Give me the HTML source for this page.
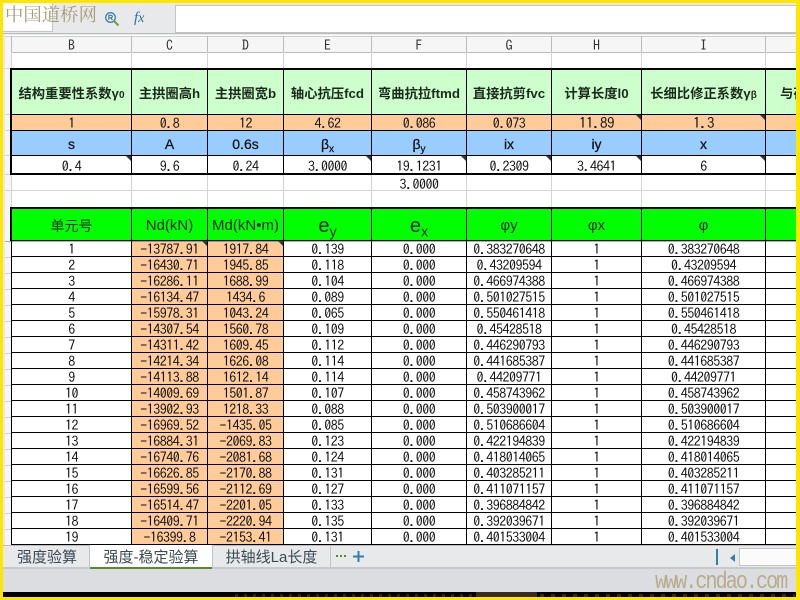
<!DOCTYPE html>
<html lang="zh"><head><meta charset="utf-8"><title>强度-稳定验算</title>
<style>
html,body{margin:0;padding:0;background:#ffe600}
#p{position:relative;width:800px;height:600px;overflow:hidden;background:#ffe600;font-family:"IPAGothic","Liberation Mono","Noto Sans CJK SC",monospace;color:#111}
#c{position:absolute;left:3px;top:3px;width:793px;height:594px;overflow:hidden;background:#e8e9eb}
.a{position:absolute}
#in{left:0;top:0;width:800px;height:600px}
table{position:absolute;left:11px;border-collapse:separate;border-spacing:0;table-layout:fixed;width:785px}
td{box-sizing:border-box;padding:0;text-align:center;border-right:1px solid #000;border-bottom:1px solid #000;white-space:nowrap;overflow:hidden;position:relative;vertical-align:middle}
td:first-child{border-left:1px solid #000}
td:last-child{border-right:0}
.m td{font:14px/14px "IPAGothic","Liberation Mono",monospace;letter-spacing:-.5px;padding-top:1px;color:#111}
.g{background:#ccffcc}.g td{height:45px;font:bold 13.3px "Liberation Sans","Noto Sans CJK SC",sans-serif;letter-spacing:0;color:#1c2a1c;padding-top:1px}
.o td{height:16px;background:#ffcc99}
.b td{height:25px;background:#99ccff;font:14px "Liberation Sans","Noto Sans CJK SC",sans-serif;letter-spacing:0;color:#111;-webkit-text-stroke:.25px #111}
.w td{height:18px;background:#fff;border-bottom:0}
.h td{height:32px;background:#00ff00;font:15px "Liberation Sans","Noto Sans CJK SC",sans-serif;letter-spacing:0;color:#0c2a0c;border-bottom:0}
.d td{height:16px;background:#fff}
.d td:nth-child(2),.d td:nth-child(3){background:#ffcc99}
.t::after{content:"";position:absolute;top:0;right:0;border-top:5px solid #333;border-left:5px solid transparent}
sub{font-size:.72em;line-height:0;vertical-align:-.3em}
.k{background:#000}
.v{width:1px;top:52px;height:16px;background:#d4d4d4}
.cl{font:14px "IPAGothic","Liberation Mono",monospace;top:38px;height:14px;line-height:14px;text-align:center;color:#333}
.tab{top:545px;height:23px;font:15px/26px "Liberation Sans","Noto Sans CJK SC",sans-serif;color:#3c4a55;text-align:center;box-sizing:border-box}
</style></head><body><div id="p"><div id="c"><div class="a" id="in" style="left:-3px;top:-3px">

<!-- toolbar -->
<div class="a" style="left:3px;top:3px;width:793px;height:33px;background:#e8e9eb"></div>
<div class="a" style="left:3px;top:3px;width:50px;height:29px;background:#fff;border-bottom:1px solid #c4c4c4;border-right:1px solid #c4c4c4;box-sizing:border-box"></div>
<div class="a" style="left:175px;top:5px;width:622px;height:28px;background:#fff;border:1px solid #c4c4c4;box-sizing:border-box"></div>
<div class="a" style="left:3px;top:33px;width:793px;height:1px;background:#bdbdbd"></div>
<svg class="a" style="left:104px;top:11px" width="16" height="16" viewBox="0 0 16 16"><circle cx="6.5" cy="6.5" r="4.8" fill="#eef3f6" stroke="#3a7fae" stroke-width="1.3"/><path d="M4.8 9V4.2h2.2a1.3 1.3 0 0 1 0 2.6H5M6.6 6.8 8.4 9" fill="none" stroke="#2c6a98" stroke-width="1"/><path d="M10.2 10.2 14.4 14.4" stroke="#6a9a3a" stroke-width="2"/></svg>
<div class="a" style="left:134px;top:8px;font:italic 15px 'Liberation Serif',serif;color:#2d6f9c;line-height:20px">f<span style="font-size:14px">x</span></div>

<!-- sheet -->
<div class="a" style="left:5px;top:35px;width:791px;height:510px;background:#fff"></div>
<div class="a" style="left:3px;top:35px;width:2px;height:510px;background:#e8e9eb"></div>
<div class="a" style="left:5px;top:36px;width:791px;height:16px;background:#f6f6f6;border-bottom:1px solid #bbb"></div>
<div class="a" style="left:5px;top:36px;width:6px;height:509px;background:#f6f6f6"></div>
<div class="a" style="left:5px;top:36px;width:791px;height:1px;background:#ccc"></div>
<div class="a" style="left:11px;top:36px;width:1px;height:17px;background:#bbb"></div>
<div class="a" style="left:131px;top:36px;width:1px;height:17px;background:#bbb"></div>
<div class="a" style="left:207px;top:36px;width:1px;height:17px;background:#bbb"></div>
<div class="a" style="left:283px;top:36px;width:1px;height:17px;background:#bbb"></div>
<div class="a" style="left:371px;top:36px;width:1px;height:17px;background:#bbb"></div>
<div class="a" style="left:466px;top:36px;width:1px;height:17px;background:#bbb"></div>
<div class="a" style="left:551px;top:36px;width:1px;height:17px;background:#bbb"></div>
<div class="a" style="left:641px;top:36px;width:1px;height:17px;background:#bbb"></div>
<div class="a" style="left:765px;top:36px;width:1px;height:17px;background:#bbb"></div>
<div class="a cl" style="left:12px;width:119px">B</div>
<div class="a cl" style="left:132px;width:75px">C</div>
<div class="a cl" style="left:208px;width:75px">D</div>
<div class="a cl" style="left:284px;width:87px">E</div>
<div class="a cl" style="left:372px;width:94px">F</div>
<div class="a cl" style="left:467px;width:84px">G</div>
<div class="a cl" style="left:552px;width:89px">H</div>
<div class="a cl" style="left:642px;width:123px">I</div>

<!-- light gridlines -->
<div class="a v" style="left:11px"></div><div class="a v" style="left:131px"></div><div class="a v" style="left:207px"></div><div class="a v" style="left:283px"></div><div class="a v" style="left:371px"></div><div class="a v" style="left:466px"></div><div class="a v" style="left:551px"></div><div class="a v" style="left:641px"></div><div class="a v" style="left:765px"></div>
<div class="a v" style="left:11px;top:175px;height:33px"></div><div class="a v" style="left:131px;top:175px;height:33px"></div><div class="a v" style="left:207px;top:175px;height:33px"></div><div class="a v" style="left:283px;top:175px;height:33px"></div><div class="a v" style="left:371px;top:175px;height:33px"></div><div class="a v" style="left:466px;top:175px;height:33px"></div><div class="a v" style="left:551px;top:175px;height:33px"></div><div class="a v" style="left:641px;top:175px;height:33px"></div><div class="a v" style="left:765px;top:175px;height:33px"></div>
<div class="a" style="left:12px;top:190px;width:784px;height:1px;background:#d4d4d4"></div>
<div class="a" style="left:5px;top:68px;width:6px;height:1px;background:#d4d4d4"></div>
<div class="a" style="left:5px;top:114px;width:6px;height:1px;background:#d4d4d4"></div>
<div class="a" style="left:5px;top:130px;width:6px;height:1px;background:#d4d4d4"></div>
<div class="a" style="left:5px;top:155px;width:6px;height:1px;background:#d4d4d4"></div>
<div class="a" style="left:5px;top:174px;width:6px;height:1px;background:#d4d4d4"></div>
<div class="a" style="left:5px;top:190px;width:6px;height:1px;background:#d4d4d4"></div>
<div class="a" style="left:5px;top:257px;width:6px;height:288px;background:repeating-linear-gradient(180deg,#d4d4d4 0,#d4d4d4 1px,transparent 1px,transparent 16px)"></div>
<div class="a" style="left:372px;top:177px;width:94px;text-align:center;font:14px/14px 'IPAGothic','Liberation Mono',monospace;letter-spacing:-.5px">3.0000</div>

<!-- top table -->
<table class="m" style="top:70px">
<colgroup><col style="width:121px"><col style="width:76px"><col style="width:76px"><col style="width:88px"><col style="width:95px"><col style="width:85px"><col style="width:90px"><col style="width:124px"><col style="width:30px"></colgroup>
<tr class="g"><td style="background:#ccffcc">结构重要性系数γ<span style="font-size:10px">0</span></td><td style="background:#ccffcc">主拱圈高h</td><td style="background:#ccffcc">主拱圈宽b</td><td style="background:#ccffcc">轴心抗压fcd</td><td style="background:#ccffcc">弯曲抗拉ftmd</td><td style="background:#ccffcc">直接抗剪fvc</td><td style="background:#ccffcc">计算长度l0</td><td style="background:#ccffcc">长细比修正系数γ<span style="font-size:10px">β</span></td><td style="background:#ccffcc;text-align:left;padding-left:14px">与荷</td></tr>
<tr class="o"><td>1</td><td>0.8</td><td>12</td><td>4.62</td><td>0.086</td><td>0.073</td><td class="t" style="font-size:15px">11.89</td><td class="t" style="font-size:15px">1.3</td><td></td></tr>
<tr class="b"><td>s</td><td>A</td><td>0.6s</td><td>β<sub>x</sub></td><td>β<sub>y</sub></td><td>ix</td><td>iy</td><td>x</td><td></td></tr>
<tr class="w"><td class="t">0.4</td><td>9.6</td><td>0.24</td><td class="t">3.0000</td><td class="t">19.1231</td><td class="t">0.2309</td><td class="t">3.4641</td><td class="t">6</td><td></td></tr>
</table>
<div class="a k" style="left:10px;top:68px;width:786px;height:2px"></div>
<div class="a k" style="left:10px;top:173px;width:786px;height:2px"></div>
<div class="a k" style="left:10px;top:68px;width:2px;height:107px"></div>

<!-- data table -->
<table class="m" style="top:209px">
<colgroup><col style="width:121px"><col style="width:76px"><col style="width:76px"><col style="width:88px"><col style="width:95px"><col style="width:85px"><col style="width:90px"><col style="width:124px"><col style="width:30px"></colgroup>
<tr class="h"><td style="font-size:14px">单元号</td><td>Nd(kN)</td><td>Md(kN•m)</td><td style="font-size:20px;line-height:30px;padding-top:2px">e<sub>y</sub></td><td style="font-size:20px;line-height:30px;padding-top:2px">e<sub>x</sub></td><td>φy</td><td>φx</td><td>φ</td><td></td></tr>
</table>
<table class="m d" style="top:241px">
<colgroup><col style="width:121px"><col style="width:76px"><col style="width:76px"><col style="width:88px"><col style="width:95px"><col style="width:85px"><col style="width:90px"><col style="width:124px"><col style="width:30px"></colgroup>
<tr><td>1</td><td class="t">-13787.91</td><td class="t">1917.84</td><td>0.139</td><td>0.000</td><td>0.383270648</td><td>1</td><td>0.383270648</td><td></td></tr>
<tr><td>2</td><td>-16430.71</td><td>1945.85</td><td>0.118</td><td>0.000</td><td>0.43209594</td><td>1</td><td>0.43209594</td><td></td></tr>
<tr><td>3</td><td>-16286.11</td><td>1688.99</td><td>0.104</td><td>0.000</td><td>0.466974388</td><td>1</td><td>0.466974388</td><td></td></tr>
<tr><td>4</td><td>-16134.47</td><td>1434.6</td><td>0.089</td><td>0.000</td><td>0.501027515</td><td>1</td><td>0.501027515</td><td></td></tr>
<tr><td>5</td><td>-15978.31</td><td>1043.24</td><td>0.065</td><td>0.000</td><td>0.550461418</td><td>1</td><td>0.550461418</td><td></td></tr>
<tr><td>6</td><td>-14307.54</td><td>1560.78</td><td>0.109</td><td>0.000</td><td>0.45428518</td><td>1</td><td>0.45428518</td><td></td></tr>
<tr><td>7</td><td>-14311.42</td><td>1609.45</td><td>0.112</td><td>0.000</td><td>0.446290793</td><td>1</td><td>0.446290793</td><td></td></tr>
<tr><td>8</td><td>-14214.34</td><td>1626.08</td><td>0.114</td><td>0.000</td><td>0.441685387</td><td>1</td><td>0.441685387</td><td></td></tr>
<tr><td>9</td><td>-14113.88</td><td>1612.14</td><td>0.114</td><td>0.000</td><td>0.44209771</td><td>1</td><td>0.44209771</td><td></td></tr>
<tr><td>10</td><td>-14009.69</td><td>1501.87</td><td>0.107</td><td>0.000</td><td>0.458743962</td><td>1</td><td>0.458743962</td><td></td></tr>
<tr><td>11</td><td>-13902.93</td><td>1218.33</td><td>0.088</td><td>0.000</td><td>0.503900017</td><td>1</td><td>0.503900017</td><td></td></tr>
<tr><td>12</td><td>-16969.52</td><td>-1435.05</td><td>0.085</td><td>0.000</td><td>0.510686604</td><td>1</td><td>0.510686604</td><td></td></tr>
<tr><td>13</td><td>-16884.31</td><td>-2069.83</td><td>0.123</td><td>0.000</td><td>0.422194839</td><td>1</td><td>0.422194839</td><td></td></tr>
<tr><td>14</td><td>-16740.76</td><td>-2081.68</td><td>0.124</td><td>0.000</td><td>0.418014065</td><td>1</td><td>0.418014065</td><td></td></tr>
<tr><td>15</td><td>-16626.85</td><td>-2170.88</td><td>0.131</td><td>0.000</td><td>0.403285211</td><td>1</td><td>0.403285211</td><td></td></tr>
<tr><td>16</td><td>-16599.56</td><td>-2112.69</td><td>0.127</td><td>0.000</td><td>0.411071157</td><td>1</td><td>0.411071157</td><td></td></tr>
<tr><td>17</td><td>-16514.47</td><td>-2201.05</td><td>0.133</td><td>0.000</td><td>0.396884842</td><td>1</td><td>0.396884842</td><td></td></tr>
<tr><td>18</td><td>-16409.71</td><td>-2220.94</td><td>0.135</td><td>0.000</td><td>0.392039671</td><td>1</td><td>0.392039671</td><td></td></tr>
<tr><td>19</td><td>-16399.8</td><td>-2153.41</td><td>0.131</td><td>0.000</td><td>0.401533004</td><td>1</td><td>0.401533004</td><td></td></tr>
</table>
<div class="a k" style="left:10px;top:207px;width:786px;height:2px"></div>
<div class="a k" style="left:10px;top:240px;width:786px;height:1px"></div>
<div class="a k" style="left:10px;top:207px;width:2px;height:34px"></div>
<div class="a" style="left:5px;top:241px;width:791px;height:1px;background:#3a5a2a;opacity:.45"></div>

<!-- tab bar -->
<div class="a" style="left:3px;top:545px;width:793px;height:24px;background:#e8e9eb;border-top:1px solid #bdbdbd;border-bottom:2px solid #c8c9cc;box-sizing:border-box"></div>
<div class="a" style="left:3px;top:569px;width:793px;height:23px;background:#dcdde1"></div>
<div class="a tab" style="left:5px;width:85px;border-right:1px solid #c4c4c4">强度验算</div>
<div class="a tab" style="left:90px;width:122px;background:#fff;border-bottom:2px solid #5a8a2e;height:24px">强度-稳定验算</div>
<div class="a tab" style="left:212px;width:119px;border-left:1px solid #c4c4c4;border-right:1px solid #c4c4c4">拱轴线La长度</div>
<div class="a" style="left:336px;top:555px;width:2px;height:2px;background:#4f8a2e;box-shadow:4px 0 #4f8a2e,8px 0 #4f8a2e"></div>
<svg class="a" style="left:353px;top:551px" width="11" height="11"><path d="M5.5 0v11M0 5.5h11" stroke="#2f7fb0" stroke-width="2"/></svg>
<div class="a" style="left:716px;top:549px;width:2px;height:16px;background:#2f7fb0"></div>
<div class="a" style="left:730px;top:554px;border-right:5px solid #2f7fb0;border-top:4px solid transparent;border-bottom:4px solid transparent"></div>
<div class="a" style="left:739px;top:548px;width:58px;height:18px;background:#fbfbfb;border:1px solid #c4c4c4;box-sizing:border-box"></div>

<!-- bottom dark band -->
<div class="a k" style="left:3px;top:592px;width:793px;height:5px"></div>
<div class="a" style="left:476px;top:592px;width:61px;height:5px;background:#3d2a1f"></div>
<div class="a" style="left:235px;top:594px;width:240px;height:3px;opacity:.6;background:repeating-linear-gradient(90deg,#4a3a2c 0,#4a3a2c 3px,transparent 3px,transparent 9px)"></div>
<div class="a" style="left:540px;top:594px;width:255px;height:3px;opacity:.6;background:repeating-linear-gradient(90deg,#5a4630 0,#5a4630 4px,transparent 4px,transparent 11px)"></div>

<!-- watermarks -->
<div class="a" style="left:5px;top:2px;font:18.4px/24px 'Noto Serif CJK SC','Liberation Serif',serif;color:#a89a78;white-space:nowrap">中国道桥网</div>
<div class="a" style="left:655px;top:570px;font:20px/25px 'Liberation Mono',monospace;letter-spacing:-1.9px;color:#b8ac8c;white-space:nowrap;transform:scaleY(1.2);transform-origin:0 50%">www.cndao.com</div>
</div></div></div></body></html>
